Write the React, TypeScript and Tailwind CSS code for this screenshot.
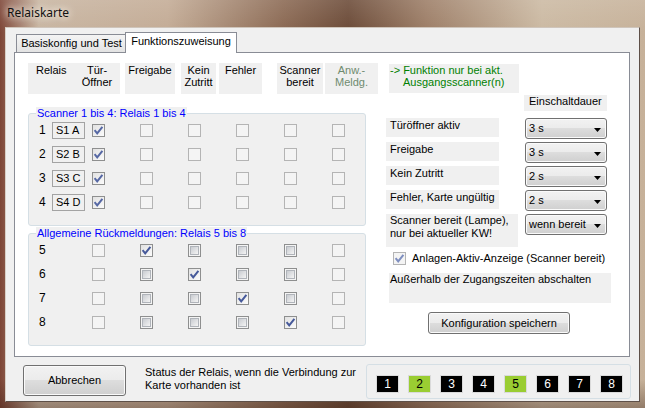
import React from "react";

type CbKind = "off" | "on" | "dis" | "dison";

function Tick({ color }: { color: string }) {
  return (
    <svg width="11" height="11" viewBox="0 0 11 11" className="block">
      <path d="M1.6 5.2 L4.2 8.4 L9.4 1.8" fill="none" stroke={color} strokeWidth="2" />
    </svg>
  );
}

function Cb({ kind, tick = "#46599a" }: { kind: CbKind; tick?: string }) {
  const enabled = kind === "on" || kind === "off";
  return (
    <span
      className={`w-[13px] h-[13px] shrink-0 border flex items-center justify-center ${
        enabled ? "border-[#8e8f8f]" : "border-[#b4b4b4]"
      } ${kind === "on" ? "bg-linear-to-br from-[#e2e2e2] to-[#fbfbfb]" : "bg-[#f4f4f4]"}`}
    >
      {kind === "off" && (
        <span className="w-[9px] h-[9px] border border-[#b0b4ba] bg-linear-to-br from-[#c9ccd1] to-[#f4f4f4]" />
      )}
      {(kind === "on" || kind === "dison") && <Tick color={tick} />}
    </span>
  );
}

function Combo({ value }: { value: string }) {
  return (
    <div className="w-[82px] h-[21px] shrink-0 rounded-[3px] border border-[#707070] bg-[linear-gradient(#f2f2f2,#ebebeb_50%,#dddddd_50%,#cfcfcf)] shadow-[inset_0_0_0_1px_#fafafa] flex items-center pl-[3px] pr-[5px]">
      <span className="flex-1">{value}</span>
      <svg width="7" height="4" viewBox="0 0 7 4" className="mt-[2px]">
        <path d="M0 0 H7 L3.5 4 Z" fill="#000" />
      </svg>
    </div>
  );
}

function Group({ title, children }: { title: string; children: React.ReactNode }) {
  return (
    <div className="border border-[#d5dfe5] rounded-[3px] bg-[#f0f0f0]">
      <div className="-mt-[7px] -mb-[6px] ml-[7px] h-[13px] w-fit px-[1px] bg-[#f0f0f0] text-[#0000ff]">{title}</div>
      <div className="pt-[4px] pb-[11px]">{children}</div>
    </div>
  );
}

const leds = [false, true, false, false, true, false, false, false];

export default function App() {
  return (
    <div className="w-[645px] h-[408px] overflow-hidden font-['Liberation_Sans',Arial,sans-serif] text-[11px] leading-[13px] text-black bg-[linear-gradient(180deg,rgba(255,255,255,0.12),transparent_8%,transparent_93%,rgba(50,25,15,0.35)),linear-gradient(90deg,#7d4536_0%,#c8b5a1_6%,#c3ab95_26%,#8a6852_44%,#6b4a37_54%,#9c7d66_66%,#cbb9a2_84%,#c6b199_100%)]">
      <div className="h-[27px] pl-[7px] pt-[5px] font-['Noto_Sans','Open_Sans',sans-serif] text-[12px] leading-[16px] text-[#111] [text-shadow:0_0_6px_#f4ede4,0_0_10px_#f4ede4]">
        Relaiskarte
      </div>

      <div className="ml-[5px] w-[635px] h-[375px] bg-[#f0f0f0] border border-[#5e5048] border-l-[#d8cfc6] border-t-[#cfc5bb] flex flex-col">
        {/* tab control */}
        <div className="ml-[8px] mt-[4px]">
          <div className="flex items-end h-[20px] pl-[2px]">
            <div className="w-[111px] h-[18px] border border-b-0 border-[#898c95] bg-linear-to-b from-[#f4f4f4] to-[#e3e3e3] pt-[2px] text-center">
              Basiskonfig und Test
            </div>
            <div className="relative z-10 -ml-[2px] -mb-px w-[112px] h-[21px] border border-b-0 border-[#898c95] bg-white pt-[2px] text-center">
              Funktionszuweisung
            </div>
          </div>

          <div className="w-[616px] h-[305px] border border-[#898c95] bg-white pt-[10px]">
            {/* column headers */}
            <div className="flex pl-[13px] h-[31px] leading-[12px] pt-0">
              <div className="w-[92px] bg-[#f0f0f0] flex pt-[1px]">
                <span className="pl-[8px] w-[49px]">Relais</span>
                <span className="w-[40px] text-center">
                  Tür-
                  <br />
                  Öffner
                </span>
              </div>
              <div className="ml-[5px] w-[50px] bg-[#f0f0f0] pt-[1px] text-center">Freigabe</div>
              <div className="ml-[6px] w-[35px] bg-[#f0f0f0] pt-[1px] text-center">
                Kein
                <br />
                Zutritt
              </div>
              <div className="ml-[3px] w-[43px] bg-[#f0f0f0] pt-[1px] text-center">Fehler</div>
              <div className="ml-[15px] w-[46px] bg-[#f0f0f0] pt-[1px] text-center">
                Scanner
                <br />
                bereit
              </div>
              <div className="ml-[2px] w-[53px] bg-[#f0f0f0] pt-[1px] text-center text-[#6f8b6f]">
                Anw.-
                <br />
                Meldg.
              </div>
              <div className="ml-[11px] mt-[1px] w-[130px] h-[29px] bg-[#f0f0f0] pl-[1px] text-[#008000]">
                -&gt; Funktion nur bei akt.
                <br />
                <span className="pl-[13px]">Ausgangsscanner(n)</span>
              </div>
            </div>

            <div className="flex pl-[13px]">
              {/* left column: groups */}
              <div className="w-[338px] pt-[19px] flex flex-col gap-[7px]">
                <Group title="Scanner 1 bis 4: Relais 1 bis 4">
                  {["S1 A", "S2 B", "S3 C", "S4 D"].map((s, i) => (
                    <div key={s} className="h-[24px] flex items-center pl-[10px]">
                      <span className="w-[13px] text-[12px]">{i + 1}</span>
                      <span className="w-[33px] h-[17px] border border-[#a3a3a3] bg-[#f0f0f0] pl-[3px] leading-[15px]">{s}</span>
                      <span className="ml-[7px] flex gap-[35px]">
                        <Cb kind="on" tick="#5668a4" />
                        <Cb kind="dis" />
                        <Cb kind="dis" />
                        <Cb kind="dis" />
                        <Cb kind="dis" />
                        <Cb kind="dis" />
                      </span>
                    </div>
                  ))}
                </Group>
                <Group title="Allgemeine Rückmeldungen: Relais 5 bis 8">
                  {[5, 6, 7, 8].map((n, r) => (
                    <div key={n} className="h-[24px] flex items-center pl-[10px]">
                      <span className="w-[53px] text-[12px]">{n}</span>
                      <span className="flex gap-[35px]">
                        <Cb kind="dis" />
                        {[1, 2, 3, 4].map((c) => (
                          <Cb key={c} kind={c === r + 1 ? "on" : "off"} />
                        ))}
                        <Cb kind="dis" />
                      </span>
                    </div>
                  ))}
                </Group>
              </div>

              {/* right column */}
              <div className="ml-[20px] flex flex-col">
                <div className="ml-[138px] mt-[1px] w-[83px] h-[16px] bg-[#f0f0f0] pl-[5px]">Einschaltdauer</div>
                <div className="mt-[7px] flex flex-col gap-[3px]">
                  {[
                    ["Türöffner aktiv", "3 s"],
                    ["Freigabe", "3 s"],
                    ["Kein Zutritt", "2 s"],
                    ["Fehler, Karte ungültig", "2 s"],
                  ].map(([l, v]) => (
                    <div key={l} className="flex items-start">
                      <div className="w-[113px] h-[19px] bg-[#f0f0f0] pl-[4px] pt-[1px]">{l}</div>
                      <div className="ml-[26px]">
                        <Combo value={v} />
                      </div>
                    </div>
                  ))}
                  <div className="flex items-start">
                    <div className="w-[132px] h-[33px] bg-[#f0f0f0] pl-[4px]">
                      Scanner bereit (Lampe),
                      <br />
                      nur bei aktueller KW!
                    </div>
                    <div className="ml-[7px]">
                      <Combo value="wenn bereit" />
                    </div>
                  </div>
                </div>
                <div className="mt-[5px] ml-[7px] flex items-center h-[13px]">
                  <Cb kind="dison" tick="#7e8ebf" />
                  <span className="ml-[6px]">Anlagen-Aktiv-Anzeige (Scanner bereit)</span>
                </div>
                <div className="mt-[8px] ml-[3px] w-[222px] h-[30px] bg-[#f0f0f0] pl-[1px]">
                  Außerhalb der Zugangszeiten abschalten
                </div>
                <button className="mt-[9px] ml-[42px] w-[142px] h-[22px] rounded-[3px] border border-[#707070] bg-[linear-gradient(#f2f2f2,#ebebeb_50%,#dddddd_50%,#cfcfcf)] shadow-[inset_0_0_0_1px_#fafafa] text-center">
                  Konfiguration speichern
                </button>
              </div>
            </div>
          </div>
        </div>

        {/* bottom row */}
        <div className="flex items-start mt-[7px]">
          <button className="ml-[17px] mt-[1px] w-[103px] h-[31px] rounded-[3px] border border-[#707070] bg-[linear-gradient(#f2f2f2,#ebebeb_50%,#dddddd_50%,#cfcfcf)] shadow-[inset_0_0_0_1px_#fafafa] text-center">
            Abbrechen
          </button>
          <div className="ml-[19px] mt-[2px]">
            Status der Relais, wenn die Verbindung zur
            <br />
            Karte vorhanden ist
          </div>
          <div className="ml-auto mr-[8px] w-[265px] h-[35px] border border-[#d5dfe5] rounded-[3px] flex items-start pt-[10px] pl-[9px] gap-[9px]">
            {leds.map((on, i) => (
              <div
                key={i}
                className={`w-[23px] h-[18px] border border-[#dadada] flex items-center justify-center text-[12px] ${
                  on ? "bg-[#9acd32] text-black" : "bg-black text-white"
                }`}
              >
                {i + 1}
              </div>
            ))}
          </div>
        </div>
      </div>
    </div>
  );
}
